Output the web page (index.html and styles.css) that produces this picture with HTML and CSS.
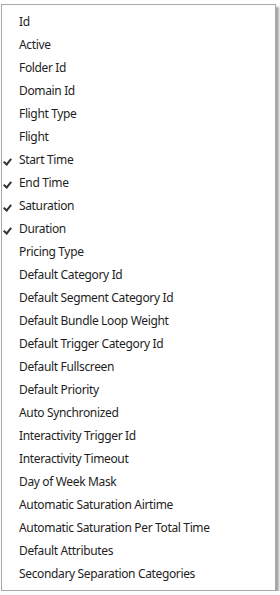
FILE: index.html
```html
<!DOCTYPE html>
<html lang="en">

<head>
    <meta charset="UTF-8">
    <meta name="viewport" content="width=device-width, initial-scale=1.0">
    <title>Columns</title>
    <link rel="stylesheet" href="styles.css">
</head>

<body>
    <ul class="column-menu">
        <li class="item">Id</li>
        <li class="item">Active</li>
        <li class="item">Folder Id</li>
        <li class="item">Domain Id</li>
        <li class="item">Flight Type</li>
        <li class="item">Flight</li>
        <li class="item checked">Start Time</li>
        <li class="item checked">End Time</li>
        <li class="item checked">Saturation</li>
        <li class="item checked">Duration</li>
        <li class="item">Pricing Type</li>
        <li class="item">Default Category Id</li>
        <li class="item">Default Segment Category Id</li>
        <li class="item">Default Bundle Loop Weight</li>
        <li class="item">Default Trigger Category Id</li>
        <li class="item">Default Fullscreen</li>
        <li class="item">Default Priority</li>
        <li class="item">Auto Synchronized</li>
        <li class="item">Interactivity Trigger Id</li>
        <li class="item">Interactivity Timeout</li>
        <li class="item">Day of Week Mask</li>
        <li class="item">Automatic Saturation Airtime</li>
        <li class="item">Automatic Saturation Per Total Time</li>
        <li class="item">Default Attributes</li>
        <li class="item">Secondary Separation Categories</li>
    </ul>
</body>

</html>
```

FILE: styles.css
```css
/* Column chooser menu */
body {
    margin: 0;
    padding: 0;
    background-color: #ffffff;
    font-family: "Noto Sans", "Open Sans", sans-serif;
}

.column-menu {
    list-style: none;
    box-sizing: border-box;
    width: 275px;
    height: 587px;
    margin: 4px 0 0 1px;
    padding: 5px 0;
    background-color: #ffffff;
    border: 1px solid #a8a8a8;
    box-shadow: 3px 3px 2px rgba(0, 0, 0, 0.35);
}

.item {
    position: relative;
    height: 23px;
    line-height: 24px;
    padding-left: 17px;
    font-size: 12px;
    letter-spacing: -0.35px;
    color: #1e1e1e;
    white-space: nowrap;
}

/* check mark for visible columns */
.item.checked::before {
    content: "";
    position: absolute;
    left: 3px;
    top: 9px;
    width: 3px;
    height: 6px;
    border-right: 2px solid #333333;
    border-bottom: 2px solid #333333;
    transform: rotate(40deg);
}
```
